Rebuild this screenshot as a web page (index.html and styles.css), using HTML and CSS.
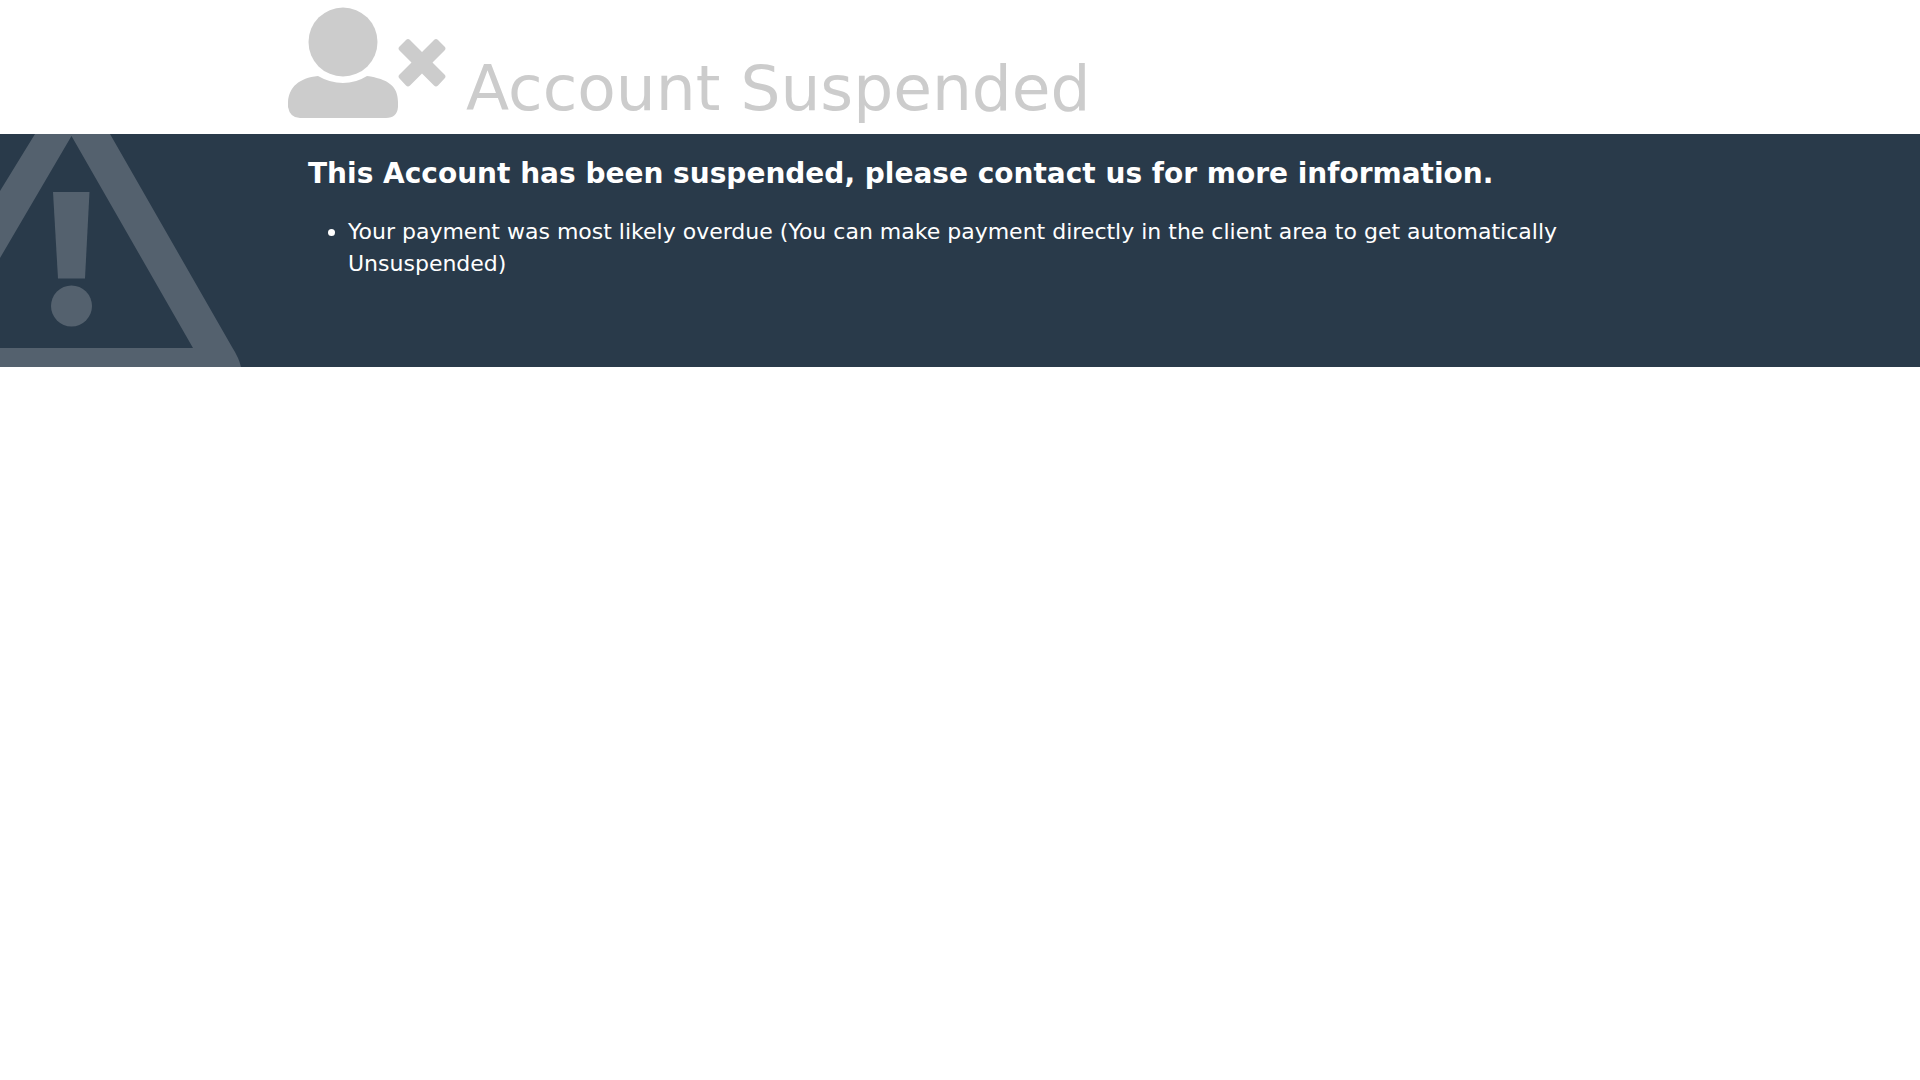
FILE: index.html
```html
<!DOCTYPE html>
<html lang="en">
<head>
    <meta charset="UTF-8">
    <meta name="viewport" content="width=device-width, initial-scale=1.0">
    <title>Account Suspended</title>
    <link rel="stylesheet" href="styles.css">
</head>
<body>

<header class="container status">
    <svg class="status-icon" viewBox="0 0 158 120" aria-hidden="true">
        <circle cx="55" cy="42" r="34.5"/>
        <path d="M30 76Q42 83 55 83T79 76C100 79 110 86 110 102V107Q109 118 98 118H12Q2 118 0 107V102C1 87 11 78 30 76Z"/>
        <path d="M111.500 46.500L118 40Q120 38 122 40L134 52L146 40Q148 38 150 40L156.500 46.500Q158.500 48.500 156.500 50.500L144.500 62.500L156.500 74.500Q158.500 76.500 156.500 78.500L150 85.500Q148 87.500 146 85.500L134 73.500L122 85.500Q120 87.500 118 85.500L111.500 78.500Q109.500 76.500 111.500 74.500L123.500 62.500L111.500 50.500Q109.500 48.500 111.500 46.500Z"/>
    </svg>
    <h1 class="status-reason">Account Suspended</h1>
</header>

<section class="additional-info">
    <svg class="info-image" viewBox="0 0 250 233" aria-hidden="true">
        <path fill-rule="evenodd" d="M35 0H110L232 213Q239 224 241 233H0V214H193L71.500 2L0 124V57Z"/>
        <path d="M53 58H89.500L85 144.500H58Z"/>
        <circle cx="71.500" cy="172" r="20.500"/>
    </svg>
    <div class="container">
        <div class="additional-info-items">
            <h2 class="info-heading">This Account has been suspended, please contact us for more information.</h2>
            <ul class="info-list">
                <li>Your payment was most likely overdue (You can make payment directly in the client area to get automatically Unsuspended)</li>
            </ul>
        </div>
    </div>
</section>

</body>
</html>
```
FILE: styles.css
```css
* {
    box-sizing: border-box;
}
body {
    margin: 0;
    font-family: "DejaVu Sans", Verdana, sans-serif;
    background-color: #ffffff;
    color: #cccccc;
}
.container {
    width: 70%;
    margin: 0 auto;
}
.status {
    display: flex;
    align-items: flex-end;
    gap: 20px;
    padding-bottom: 14px;
}
.status-icon {
    width: 158px;
    flex-shrink: 0;
    fill: #cccccc;
}
.status-reason {
    margin: 0;
    font-size: 63px;
    font-weight: normal;
    line-height: 62px;
}
.additional-info {
    position: relative;
    background-color: #293a4a;
    color: #ffffff;
    overflow: hidden;
}
/* warning sign behind the text */
.info-image {
    position: absolute;
    left: 0;
    top: 0;
    width: 250px;
    fill: #54616e;
}
.additional-info-items {
    position: relative;
    min-height: 233px;
    padding: 20px;
}
.info-heading {
    margin: 0;
    font-size: 28px;
    line-height: 40px;
}
.info-list {
    margin: 22px 0;
    padding-left: 40px;
    font-size: 22px;
    line-height: 32px;
}
```
